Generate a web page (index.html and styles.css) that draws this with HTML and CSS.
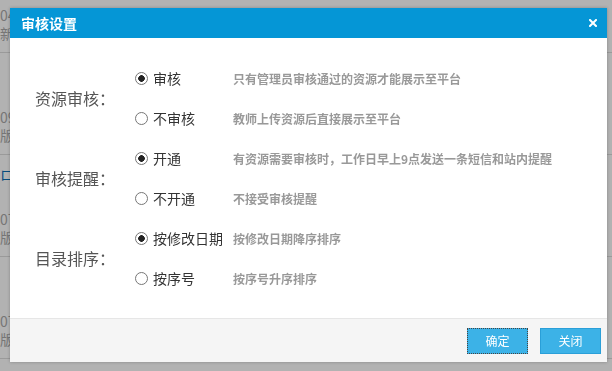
FILE: index.html
```html
<html lang="zh-CN">
<head>
    <meta charset="UTF-8">
    <title>审核设置</title>
    <link rel="stylesheet" href="styles.css">
</head>
<body>
    <div class="page">
        <div class="item">
            <div class="date">04</div>
            <div class="title">新</div>
            <div class="item-foot"></div>
        </div>
        <div class="item">
            <div class="date">09</div>
            <div class="title">版</div>
            <div class="item-foot"><a class="link">ロス</a></div>
        </div>
        <div class="item">
            <div class="date">07</div>
            <div class="title">版</div>
            <div class="item-foot"></div>
        </div>
        <div class="item">
            <div class="date">07</div>
            <div class="title">版</div>
            <div class="item-foot"><a class="link">一 · 课件 · 资源</a></div>
        </div>
    </div>

    <div class="mask"></div>

    <div class="dialog">
        <div class="dialog-head">
            <span class="dialog-title">审核设置</span>
            <svg class="dialog-close" width="8" height="8" viewBox="0 0 8 8">
                <path d="M1 1L7 7M7 1L1 7" stroke="#fff" stroke-width="2" stroke-linecap="square"/>
            </svg>
        </div>
        <div class="dialog-body">
            <div class="group">
                <div class="group-label">资源审核：</div>
                <div class="group-opts">
                    <label class="opt"><input type="radio" name="audit" checked><span class="opt-name">审核</span><span class="opt-desc">只有管理员审核通过的资源才能展示至平台</span></label>
                    <label class="opt"><input type="radio" name="audit"><span class="opt-name">不审核</span><span class="opt-desc">教师上传资源后直接展示至平台</span></label>
                </div>
            </div>
            <div class="group">
                <div class="group-label">审核提醒：</div>
                <div class="group-opts">
                    <label class="opt"><input type="radio" name="remind" checked><span class="opt-name">开通</span><span class="opt-desc">有资源需要审核时，工作日早上9点发送一条短信和站内提醒</span></label>
                    <label class="opt"><input type="radio" name="remind"><span class="opt-name">不开通</span><span class="opt-desc">不接受审核提醒</span></label>
                </div>
            </div>
            <div class="group">
                <div class="group-label">目录排序：</div>
                <div class="group-opts">
                    <label class="opt"><input type="radio" name="sort" checked><span class="opt-name">按修改日期</span><span class="opt-desc">按修改日期降序排序</span></label>
                    <label class="opt"><input type="radio" name="sort"><span class="opt-name">按序号</span><span class="opt-desc">按序号升序排序</span></label>
                </div>
            </div>
        </div>
        <div class="dialog-foot">
            <button class="btn btn-focus">确定</button>
            <button class="btn">关闭</button>
        </div>
    </div>
</body>
</html>
```

FILE: styles.css
```css
* {
    box-sizing: border-box;
    margin: 0;
    padding: 0;
}
body {
    background: #fff;
    font-family: "Noto Sans CJK SC", "Noto Sans", sans-serif;
    overflow: hidden;
}
/* page behind the dialog */
.page {
    height: 371px;
    overflow: hidden;
}
.item {
    height: 102px;
    padding-top: 6px;
    font-size: 14px;
}
.date, .title {
    line-height: 18px;
    color: #aaa;
    white-space: nowrap;
}
.item-foot {
    margin-top: 10px;
    border-top: 1px solid #ddd;
    padding-top: 10px;
    line-height: 18px;
    white-space: nowrap;
}
.link {
    color: #0b6db5;
    font-size: 14px;
}
.mask {
    position: fixed;
    inset: 0;
    background: rgba(0, 0, 0, 0.3);
}
/* dialog */
.dialog {
    position: absolute;
    left: 10px;
    top: 8px;
    width: 597px;
    background: #fff;
    box-shadow: 0 0 3px rgba(0, 0, 0, 0.25);
}
.dialog-head {
    height: 30px;
    background: #0596d6;
    display: flex;
    align-items: center;
    justify-content: space-between;
    padding: 0 10px 0 11px;
}
.dialog-title {
    color: #fff;
    font-size: 14px;
    font-weight: bold;
}
.dialog-close {
    display: block;
}
.dialog-body {
    height: 280px;
    padding: 20px 0 20px 25px;
}
.group {
    display: grid;
    grid-template-columns: 100px 1fr;
    align-items: center;
}
.group-label {
    font-size: 16px;
    color: #555;
}
.opt {
    height: 40px;
    display: flex;
    align-items: center;
    font-size: 14px;
    color: #333;
}
.opt input[type=radio] {
    appearance: none;
    width: 13px;
    height: 13px;
    border: 1px solid #777;
    border-radius: 50%;
    background: #fff;
    margin: 0 5px 0 0;
    flex: none;
}
.opt input[type=radio]:checked {
    background: radial-gradient(circle, #222 0 3px, #fff 3.6px);
}
.opt-name {
    width: 80px;
    flex: none;
}
.opt-desc {
    font-size: 12px;
    font-weight: bold;
    color: #999;
}
.dialog-foot {
    height: 44px;
    border-top: 1px solid #e6e6e6;
    background: #f5f5f5;
    display: flex;
    justify-content: flex-end;
    align-items: center;
    gap: 12px;
    padding-right: 6px;
}
.btn {
    width: 61px;
    height: 26px;
    border: 1px solid #2a9fd8;
    background: #3cb2e7;
    color: #fff;
    font-size: 12px;
    font-family: inherit;
}
.btn-focus {
    border: 1px dotted #444;
}
```
